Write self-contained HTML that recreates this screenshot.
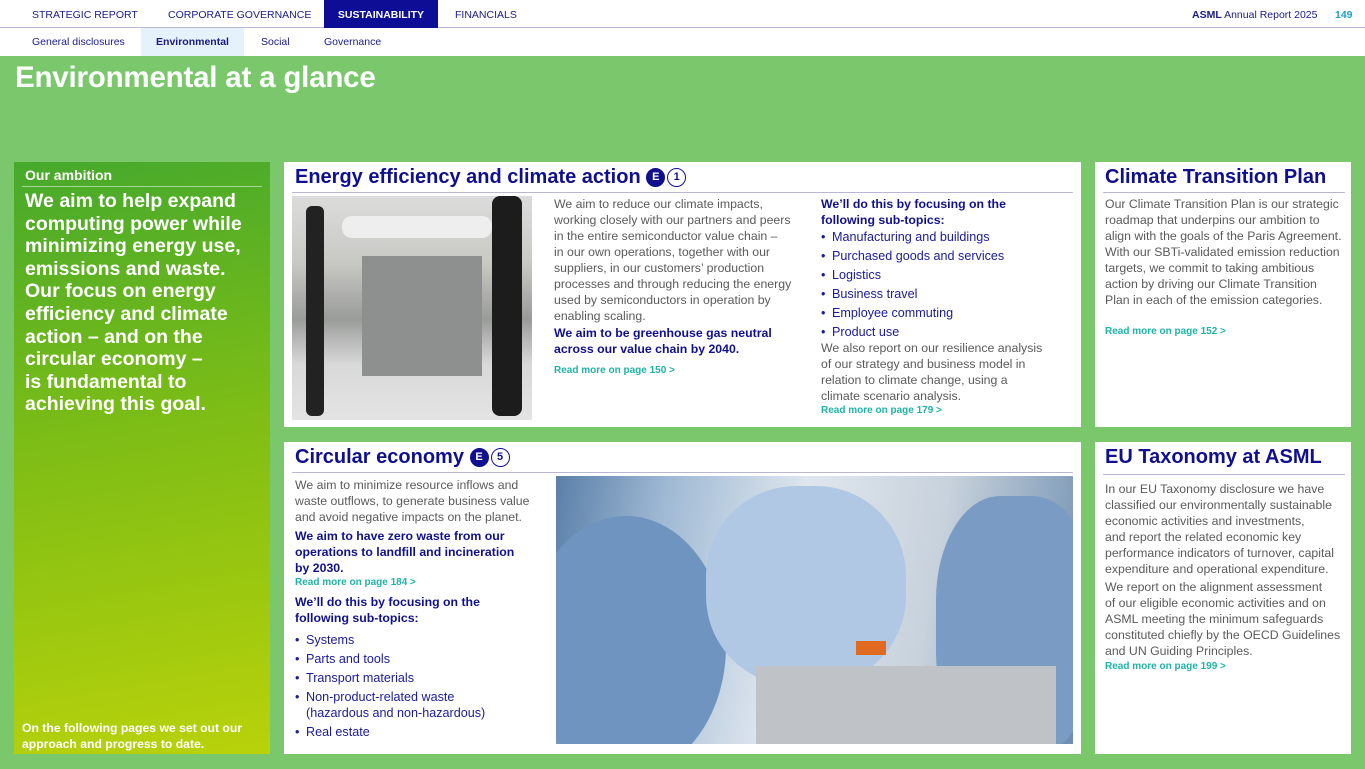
<!DOCTYPE html>
<html><head><meta charset="utf-8"><style>
*{margin:0;padding:0;box-sizing:border-box}
body{width:1365px;height:769px;overflow:hidden;background:#7ac86b;font-family:"Liberation Sans",Arial,sans-serif;position:relative}
.abs{position:absolute}
#top{left:0;top:0;width:1365px;height:28px;background:#fff;border-bottom:1px solid #b9b6d6}
#sub{left:0;top:28px;width:1365px;height:28px;background:#fff}
.nav{position:absolute;top:0;height:28px;line-height:30px;font-size:10.5px;color:#1a1a8c}
.snav{position:absolute;top:28px;height:28px;line-height:28px;font-size:10.5px;color:#1a1a8c}
h1{position:absolute;left:15px;top:61px;font-size:29.5px;color:#fff;font-weight:bold;letter-spacing:-0.2px}
.card{position:absolute;background:#fff}
.h{position:absolute;font-size:20px;font-weight:bold;color:#10108f;white-space:nowrap}
.rule{position:absolute;height:1px;background:#b9b6d6}
.t{position:absolute;font-size:12.3px;line-height:16px;color:#5a5a5a;white-space:nowrap}
.b{color:#10108f;font-weight:bold}
.lnk{position:absolute;font-size:10px;font-weight:bold;color:#1fb3a6;white-space:nowrap}
.badge{display:inline-block;width:19px;height:19px;border-radius:50%;font-size:11px;line-height:17px;text-align:center;vertical-align:3px;font-weight:bold}
.be{background:#10108f;color:#fff;border:1px solid #10108f}
.bn{border:1.5px solid #10108f;color:#10108f;margin-left:2px}
ul{list-style:none}
li{position:relative;padding-left:11px;color:#1a1a9a;margin-bottom:3px;font-size:12.6px}
li:before{content:"•";position:absolute;left:0}
</style></head><body>
<div id="top" class="abs"></div>
<div class="nav" style="left:32px">STRATEGIC REPORT</div>
<div class="nav" style="left:168px">CORPORATE GOVERNANCE</div>
<div class="nav" style="left:324px;width:114px;background:#0d0d96;color:#fff;font-weight:bold;text-align:center">SUSTAINABILITY</div>
<div class="nav" style="left:455px">FINANCIALS</div>
<div class="nav" style="left:1192px"><b>ASML</b> Annual Report 2025</div>
<div class="nav" style="left:1335px;color:#1fa0c8;font-weight:bold">149</div>
<div id="sub" class="abs"></div>
<div class="snav" style="left:32px">General disclosures</div>
<div class="snav" style="left:141px;width:103px;background:#e5f1fb;font-weight:bold;text-align:center">Environmental</div>
<div class="snav" style="left:261px">Social</div>
<div class="snav" style="left:324px">Governance</div>
<h1>Environmental at a glance</h1>

<div class="abs" style="left:14px;top:162px;width:256px;height:592px;background:linear-gradient(170deg,#46a92c 0%,#7dbd16 45%,#b9d20a 100%)"></div>
<div class="abs" style="left:25px;top:167px;font-size:14px;font-weight:bold;color:#fff">Our ambition</div>
<div class="abs" style="left:22px;top:186px;width:240px;height:1px;background:rgba(255,255,255,.5)"></div>
<div class="abs" style="left:25px;top:190px;font-size:19.5px;line-height:22.6px;font-weight:bold;color:#fff;white-space:nowrap">We aim to help expand<br>computing power while<br>minimizing energy use,<br>emissions and waste.<br>Our focus on energy<br>efficiency and climate<br>action – and on the<br>circular economy –<br>is fundamental to<br>achieving this goal.</div>
<div class="abs" style="left:22px;top:720px;font-size:12.2px;line-height:16px;font-weight:bold;color:#fff;white-space:nowrap">On the following pages we set out our<br>approach and progress to date.</div>

<!-- card 1 -->
<div class="card" style="left:284px;top:162px;width:797px;height:265px"></div>
<div class="h" style="left:295px;top:166px">Energy efficiency and climate action <span class="badge be">E</span><span class="badge bn">1</span></div>
<div class="rule" style="left:292px;top:192px;width:781px"></div>
<div class="abs" style="left:292px;top:196px;width:240px;height:224px;background:linear-gradient(180deg,#dcdcdc 0%,#c8c8c4 30%,#9a9c9a 55%,#d8d8d8 75%,#e4e4e4 100%)">
 <div class="abs" style="left:14px;top:10px;width:18px;height:210px;background:#222;border-radius:6px"></div>
 <div class="abs" style="left:70px;top:60px;width:120px;height:120px;background:#8e9090"></div>
 <div class="abs" style="left:200px;top:0;width:30px;height:220px;background:#1c1c1c;border-radius:8px"></div>
 <div class="abs" style="left:50px;top:20px;width:150px;height:22px;background:#eee;border-radius:10px"></div>
</div>
<div class="t" style="left:554px;top:196px">We aim to reduce our climate impacts,<br>working closely with our partners and peers<br>in the entire semiconductor value chain –<br>in our own operations, together with our<br>suppliers, in our customers’ production<br>processes and through reducing the energy<br>used by semiconductors in operation by<br>enabling scaling.</div>
<div class="t b" style="left:554px;top:325px">We aim to be greenhouse gas neutral<br>across our value chain by 2040.</div>
<div class="lnk" style="left:554px;top:365px">Read more on page 150 &gt;</div>
<div class="t" style="left:821px;top:196px"><span class="b">We’ll do this by focusing on the<br>following sub-topics:</span>
<ul style="margin-top:1px"><li>Manufacturing and buildings</li><li>Purchased goods and services</li><li>Logistics</li><li>Business travel</li><li>Employee commuting</li><li>Product use</li></ul>
<div style="margin-top:-3px">We also report on our resilience analysis<br>of our strategy and business model in<br>relation to climate change, using a<br>climate scenario analysis.</div></div>
<div class="lnk" style="left:821px;top:405px">Read more on page 179 &gt;</div>

<!-- card 2 -->
<div class="card" style="left:1095px;top:162px;width:256px;height:265px"></div>
<div class="h" style="left:1105px;top:166px">Climate Transition Plan</div>
<div class="rule" style="left:1103px;top:192px;width:242px"></div>
<div class="t" style="left:1105px;top:196px">Our Climate Transition Plan is our strategic<br>roadmap that underpins our ambition to<br>align with the goals of the Paris Agreement.<br>With our SBTi-validated emission reduction<br>targets, we commit to taking ambitious<br>action by driving our Climate Transition<br>Plan in each of the emission categories.</div>
<div class="lnk" style="left:1105px;top:326px">Read more on page 152 &gt;</div>

<!-- card 3 -->
<div class="card" style="left:284px;top:442px;width:797px;height:312px"></div>
<div class="h" style="left:295px;top:446px">Circular economy <span class="badge be">E</span><span class="badge bn">5</span></div>
<div class="rule" style="left:292px;top:472px;width:781px"></div>
<div class="t" style="left:295px;top:477px">We aim to minimize resource inflows and<br>waste outflows, to generate business value<br>and avoid negative impacts on the planet.</div>
<div class="t b" style="left:295px;top:528px">We aim to have zero waste from our<br>operations to landfill and incineration<br>by 2030.</div>
<div class="lnk" style="left:295px;top:577px">Read more on page 184 &gt;</div>
<div class="t b" style="left:295px;top:594px">We’ll do this by focusing on the<br>following sub-topics:</div>
<div class="t" style="left:295px;top:632px"><ul><li>Systems</li><li>Parts and tools</li><li>Transport materials</li><li>Non-product-related waste<br>(hazardous and non-hazardous)</li><li>Real estate</li></ul></div>
<div class="abs" style="left:556px;top:476px;width:517px;height:268px;overflow:hidden;background:linear-gradient(100deg,#5a7fa8 0%,#9fb9d4 20%,#dfe6ee 45%,#c8d2dc 70%,#6d8db0 100%)">
 <div class="abs" style="left:-30px;top:40px;width:200px;height:260px;background:#6f94c0;border-radius:50%"></div>
 <div class="abs" style="left:150px;top:10px;width:200px;height:200px;background:#b0c8e4;border-radius:45%"></div>
 <div class="abs" style="left:380px;top:20px;width:160px;height:260px;background:#7a9cc4;border-radius:40%"></div>
 <div class="abs" style="left:200px;top:190px;width:300px;height:80px;background:#bfc3c8"></div>
 <div class="abs" style="left:300px;top:165px;width:30px;height:14px;background:#e06a20"></div>
</div>

<!-- card 4 -->
<div class="card" style="left:1095px;top:442px;width:256px;height:312px"></div>
<div class="h" style="left:1105px;top:446px">EU Taxonomy at ASML</div>
<div class="rule" style="left:1103px;top:474px;width:242px"></div>
<div class="t" style="left:1105px;top:481px">In our EU Taxonomy disclosure we have<br>classified our environmentally sustainable<br>economic activities and investments,<br>and report the related economic key<br>performance indicators of turnover, capital<br>expenditure and operational expenditure.</div>
<div class="t" style="left:1105px;top:579px">We report on the alignment assessment<br>of our eligible economic activities and on<br>ASML meeting the minimum safeguards<br>constituted chiefly by the OECD Guidelines<br>and UN Guiding Principles.</div>
<div class="lnk" style="left:1105px;top:661px">Read more on page 199 &gt;</div>
</body></html>
